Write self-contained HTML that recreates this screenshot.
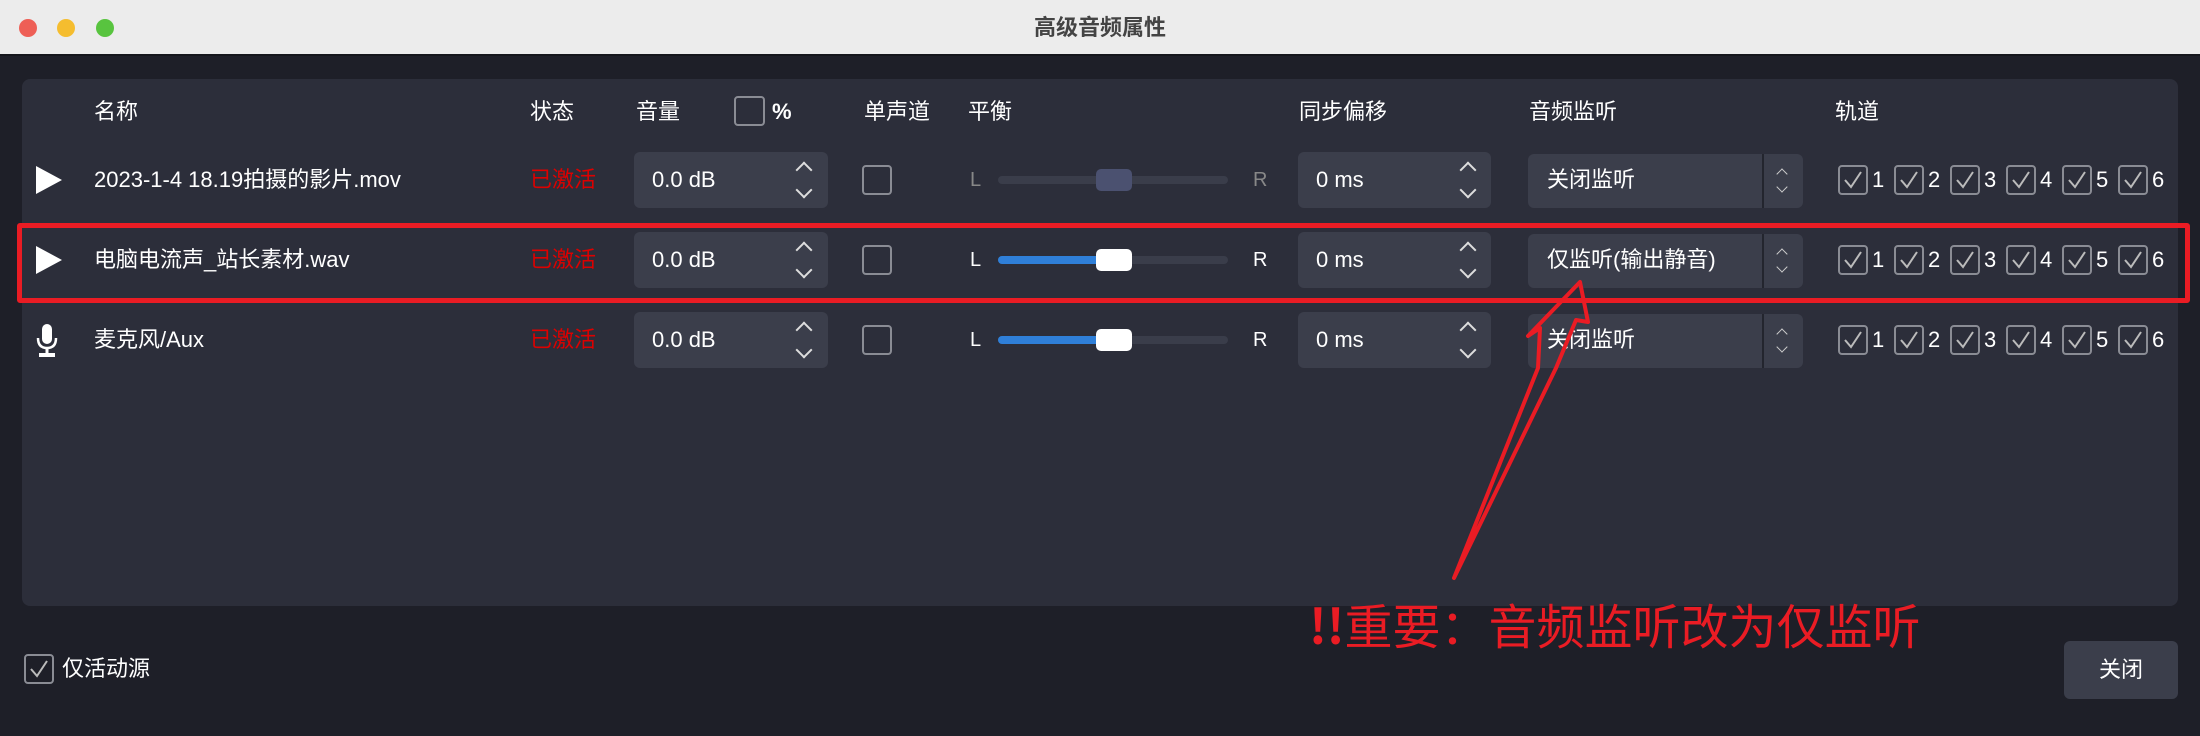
<!DOCTYPE html>
<html><head><meta charset="utf-8"><style>
*{margin:0;padding:0;box-sizing:border-box}
body{width:2200px;height:736px;overflow:hidden;background:#1e1f28;font-family:"Liberation Sans","Noto Sans CJK SC",sans-serif;color:#fff;position:relative}
.a{position:absolute}
.tb{left:0;top:0;width:2200px;height:56px;background:#ececec;border-bottom:2px solid #15161c}
.dot{width:18px;height:18px;border-radius:50%;top:19px}
.title{left:0;width:2200px;top:0;height:56px;line-height:56px;text-align:center;color:#444;font-size:22px;font-weight:bold}
.panel{left:22px;top:79px;width:2156px;height:527px;background:#2c2e3a;border-radius:8px}
.h{font-size:22px;top:94px;line-height:36px}
.t{font-size:22px;line-height:56px}
.red{color:#d00}
.box{background:#3b3e4b;border-radius:6px;height:56px}
.cb{width:30px;height:30px;border:2px solid #8a8c94;border-radius:4px}
.chev{width:12px;height:12px;border-left:2px solid #ddd;border-top:2px solid #ddd}
.trk{height:8px;border-radius:4px;background:#3a3d4a}
.knob{width:36px;height:22px;border-radius:5px}
</style></head><body>
<div class="a tb"></div>
<div class="a dot" style="left:19px;background:#ee5f56"></div>
<div class="a dot" style="left:57px;background:#f5bd2f"></div>
<div class="a dot" style="left:96px;background:#58c43f"></div>
<div class="a title">高级音频属性</div>
<div class="a panel"></div>

<div class="a h" style="left:94px">名称</div>
<div class="a h" style="left:530px">状态</div>
<div class="a h" style="left:636px">音量</div>
<div class="a cb" style="left:734px;top:96px;width:31px"></div>
<div class="a h" style="left:772px;font-weight:bold">%</div>
<div class="a h" style="left:864px">单声道</div>
<div class="a h" style="left:968px">平衡</div>
<div class="a h" style="left:1299px">同步偏移</div>
<div class="a h" style="left:1529px">音频监听</div>
<div class="a h" style="left:1835px">轨道</div>

<div id="rows"></div>
<script>
var rows=[
 {y:152,name:"2023-1-4 18.19拍摄的影片.mov",icon:"play",mon:"关闭监听",dis:true},
 {y:232,name:"电脑电流声_站长素材.wav",icon:"play",mon:"仅监听(输出静音)",dis:false},
 {y:312,name:"麦克风/Aux",icon:"mic",mon:"关闭监听",dis:false}
];
var h="";
rows.forEach(function(r){
 var y=r.y,c=y+28;
 if(r.icon=="play") h+='<svg class="a" style="left:36px;top:'+(c-14)+'px" width="26" height="28"><polygon points="0,0 26,14 0,28" fill="#fff"/></svg>';
 else h+='<svg class="a" style="left:36px;top:'+(c-16)+'px" width="22" height="34"><rect x="6" y="0" width="10" height="20" rx="5" fill="#fff"/><path d="M2 14 Q2 24 11 24 Q20 24 20 14" stroke="#fff" stroke-width="2.5" fill="none"/><rect x="9.5" y="24" width="3" height="6" fill="#fff"/><rect x="3" y="29" width="16" height="4" fill="#fff"/></svg>';
 h+='<div class="a t" style="left:94px;top:'+y+'px">'+r.name+'</div>';
 h+='<div class="a t red" style="left:530px;top:'+y+'px">已激活</div>';
 h+='<div class="a box" style="left:634px;top:'+y+'px;width:194px"></div><div class="a t" style="left:652px;top:'+y+'px">0.0 dB</div>';
 h+='<div class="a chev" style="left:798px;top:'+(c-16)+'px;transform:rotate(45deg)"></div><div class="a chev" style="left:798px;top:'+(c+4)+'px;transform:rotate(225deg)"></div>';
 h+='<div class="a cb" style="left:862px;top:'+(c-15)+'px"></div>';
 var lc=r.dis?"#888":"#fff";
 h+='<div class="a t" style="left:970px;top:'+y+'px;color:'+lc+';font-size:20px">L</div>';
 h+='<div class="a trk" style="left:998px;top:'+(c-4)+'px;width:230px"></div>';
 if(!r.dis) h+='<div class="a trk" style="left:998px;top:'+(c-4)+'px;width:118px;background:#2f7fd8"></div>';
 h+='<div class="a knob" style="left:1096px;top:'+(c-11)+'px;background:'+(r.dis?'#4b5170':'#fff')+'"></div>';
 h+='<div class="a t" style="left:1253px;top:'+y+'px;color:'+lc+';font-size:20px">R</div>';
 h+='<div class="a box" style="left:1298px;top:'+y+'px;width:193px"></div><div class="a t" style="left:1316px;top:'+y+'px">0 ms</div>';
 h+='<div class="a chev" style="left:1462px;top:'+(c-16)+'px;transform:rotate(45deg)"></div><div class="a chev" style="left:1462px;top:'+(c+4)+'px;transform:rotate(225deg)"></div>';
 h+='<div class="a box" style="left:1528px;top:'+(y+2)+'px;width:275px;height:54px"></div><div class="a" style="left:1762px;top:'+(y+2)+'px;width:2px;height:54px;background:#23252e"></div>';
 h+='<div class="a t" style="left:1547px;top:'+y+'px">'+r.mon+'</div>';
 h+='<div class="a" style="left:1778px;top:'+(c-10)+'px;width:8px;height:8px;border-left:1.5px solid #ccc;border-top:1.5px solid #ccc;transform:rotate(45deg)"></div><div class="a" style="left:1778px;top:'+(c+3)+'px;width:8px;height:8px;border-left:1.5px solid #ccc;border-top:1.5px solid #ccc;transform:rotate(225deg)"></div>';
 for(var i=0;i<6;i++){var x=1838+i*56;
  h+='<div class="a cb" style="left:'+x+'px;top:'+(c-15)+'px"></div><svg class="a" style="left:'+x+'px;top:'+(c-15)+'px" width="30" height="30"><path d="M7 15 L13 22 L23 7" stroke="#bbb" stroke-width="2" fill="none"/></svg>';
  h+='<div class="a t" style="left:'+(x+34)+'px;top:'+y+'px">'+(i+1)+'</div>';}
});
document.getElementById("rows").innerHTML=h;
</script>

<div class="a" style="left:17px;top:223px;width:2173px;height:80px;border:5px solid #ea1c24;border-radius:3px"></div>

<svg class="a" style="left:0;top:0" width="2200" height="736"><path d="M1454 578 L1538 368 L1540 328 L1528 336 L1580 282 L1588 322 L1576 320 L1556 368 Z" fill="none" stroke="#ea1c24" stroke-width="4" stroke-linejoin="round"/></svg>

<div class="a" style="left:1309px;top:594px;font-size:48px;line-height:58px;color:#ea1c24;font-family:'Noto Sans CJK SC',sans-serif"><b>!!</b>重要：音频监听改为仅监听</div>

<div class="a cb" style="left:24px;top:654px"></div>
<svg class="a" style="left:24px;top:654px" width="30" height="30"><path d="M7 15 L13 22 L23 7" stroke="#bbb" stroke-width="2" fill="none"/></svg>
<div class="a t" style="left:62px;top:641px">仅活动源</div>
<div class="a box" style="left:2064px;top:641px;width:114px;height:58px"></div>
<div class="a t" style="left:2064px;top:642px;width:114px;text-align:center">关闭</div>
</body></html>
